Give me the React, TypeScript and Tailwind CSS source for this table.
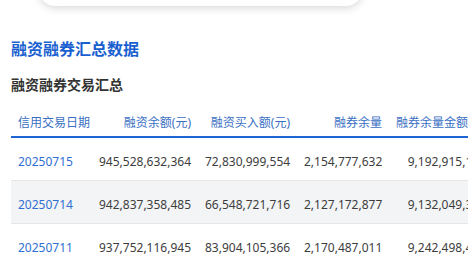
import React from 'react';

const rows = [
  { date: '20250715', rz: '945,528,632,364', mr: '72,830,999,554', rq: '2,154,777,632', je: '9,192,915,148', mc: '183,447,210' },
  { date: '20250714', rz: '942,837,358,485', mr: '66,548,721,716', rq: '2,127,172,877', je: '9,132,049,372', mc: '171,902,835' },
  { date: '20250711', rz: '937,752,116,945', mr: '83,904,105,366', rq: '2,170,487,011', je: '9,242,498,456', mc: '196,305,118' },
];

export default function App() {
  return (
    <div className="min-h-screen w-[468px] overflow-hidden bg-white font-['Noto_Sans','Noto_Sans_CJK_SC',sans-serif]">
      {/* bottom of a floating card above */}
      <div className="ml-[39px] -mt-[54px] h-[60px] w-[323px] rounded-b-2xl bg-white shadow-[0_2px_8px_rgba(0,0,0,0.16)]" />

      <div className="pl-[11px]">
        <h2 className="mt-[31px] text-[16px] font-bold leading-[24px] text-[#1a5fd0]">融资融券汇总数据</h2>
        <h3 className="mt-[13px] text-[14px] font-bold leading-[22px] text-[#333]">融资融券交易汇总</h3>

        <div className="mt-[10px] overflow-hidden">
          <table className="w-[580px] table-fixed border-collapse text-[12px] leading-[18px]">
            <thead>
              <tr className="border-b-2 border-[#1f64d4] text-[#3a70c4]">
                <th className="w-[81px] pl-[7px] pr-[7px] pt-[8px] pb-[4px] text-left font-normal whitespace-nowrap">信用交易日期</th>
                <th className="w-[106px] px-[7px] pt-[8px] pb-[4px] text-right font-normal whitespace-nowrap">融资余额(元)</th>
                <th className="w-[99px] px-[7px] pt-[8px] pb-[4px] text-right font-normal whitespace-nowrap">融资买入额(元)</th>
                <th className="w-[92px] px-[7px] pt-[8px] pb-[4px] text-right font-normal whitespace-nowrap">融券余量</th>
                <th className="w-[104px] px-[7px] pt-[8px] pb-[4px] text-right font-normal whitespace-nowrap">融券余量金额(元)</th>
                <th className="w-[98px] px-[7px] pt-[8px] pb-[4px] text-right font-normal whitespace-nowrap">融券卖出量</th>
              </tr>
            </thead>
            <tbody className="text-[#3d3d3d]">
              {rows.map((r, i) => (
                <tr key={r.date} className={`border-b border-[#e6e6e6] ${i % 2 === 1 ? 'bg-[#f3f4f5]' : 'bg-white'}`}>
                  <td className="pl-[7px] pr-[7px] pt-[15px] pb-[9px] text-left text-[#2f6fd2] whitespace-nowrap">{r.date}</td>
                  <td className="px-[7px] pt-[15px] pb-[9px] text-right whitespace-nowrap">{r.rz}</td>
                  <td className="px-[7px] pt-[15px] pb-[9px] text-right whitespace-nowrap">{r.mr}</td>
                  <td className="px-[7px] pt-[15px] pb-[9px] text-right whitespace-nowrap">{r.rq}</td>
                  <td className="px-[7px] pt-[15px] pb-[9px] text-right whitespace-nowrap">{r.je}</td>
                  <td className="px-[7px] pt-[15px] pb-[9px] text-right whitespace-nowrap">{r.mc}</td>
                </tr>
              ))}
            </tbody>
          </table>
        </div>
      </div>
    </div>
  );
}
